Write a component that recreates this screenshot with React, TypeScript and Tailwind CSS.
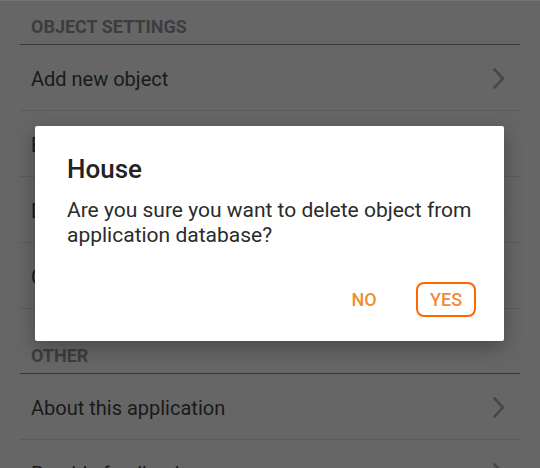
import React from 'react';

const font = { fontFamily: 'Roboto, "Noto Sans", sans-serif' };

function Chevron() {
  return (
    <svg width="12" height="21" viewBox="0 0 12 21" fill="none" className="shrink-0">
      <path d="M1.5 1.5 L10 10.5 L1.5 19.5" stroke="#474747" strokeWidth="2.6" strokeLinecap="square" />
    </svg>
  );
}

function Row({ label, last }: { label: string; last?: boolean }) {
  return (
    <>
      <div className="h-[65px] flex items-center justify-between pl-[11px] pr-[15px] pt-[2px]">
        <span className="text-[20px] leading-[24px] text-[#1a1a1a]">{label}</span>
        <Chevron />
      </div>
      {!last && <div className="h-px bg-[#5b5b5b]" />}
    </>
  );
}

function SectionHeader({ title, first }: { title: string; first?: boolean }) {
  return (
    <>
      <div className={`flex items-end pl-[11px] pb-[7px] ${first ? 'h-[43px]' : 'h-[64px]'}`}>
        <span className="text-[18px] leading-[20px] font-bold uppercase text-[#3d3d3d]">{title}</span>
      </div>
      <div className="h-px bg-[#383838]" />
    </>
  );
}

export default function App() {
  return (
    <div className="relative w-[540px] h-[468px] overflow-hidden bg-[#666666] border-t border-[#737373]" style={font}>
      <div className="px-[20px]">
        <SectionHeader title="Object settings" first />
        <Row label="Add new object" />
        <Row label="Edit object" />
        <Row label="Delete object" />
        <Row label="Clear object data" />
        <SectionHeader title="Other" />
        <Row label="About this application" />
        <Row label="Provide feedback" />
      </div>

      {/* dialog */}
      <div className="absolute left-[35px] top-[125px] w-[469px] h-[215px] bg-white rounded-[2px] shadow-[0_6px_20px_rgba(0,0,0,0.3)] flex flex-col">
        <h2 className="pl-[32px] pt-[27px] text-[26px] leading-[32px] font-medium text-[#222222]">House</h2>
        <p className="pl-[32px] pr-[20px] mt-[13px] text-[21px] leading-[25px] text-[#2b2b2b]">
          Are you sure you want to delete object from application database?
        </p>
        <div className="mt-auto flex justify-end items-center gap-[22px] pr-[28px] pb-[24px]">
          <button className="w-[60px] h-[35px] rounded-[8px] border-[2.5px] border-transparent text-[18px] font-medium text-[#f08c36]">
            NO
          </button>
          <button className="w-[60px] h-[35px] rounded-[8px] border-[2.5px] border-[#ff6600] text-[18px] font-medium text-[#f08c36]">
            YES
          </button>
        </div>
      </div>
    </div>
  );
}
